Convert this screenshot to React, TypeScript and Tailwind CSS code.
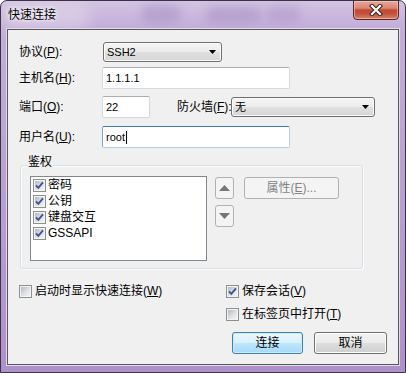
import React from "react";

const Mn = ({ c }: { c: string }) => (
  <span className="underline decoration-1 underline-offset-[1px]">{c}</span>
);

const Box = ({ checked }: { checked?: boolean }) => (
  <span className="relative flex h-[13px] w-[13px] shrink-0 items-center justify-center border border-[#8e8f8f] bg-[#f4f4f4]">
    <span className="h-[9px] w-[9px] bg-[linear-gradient(135deg,#b3b8c0_0%,#dfe1e4_55%,#f3f3f3_100%)]" />
    {checked && (
      <svg className="absolute left-[0px] top-[0px]" width="11" height="11" viewBox="0 0 11 11">
        <path d="M2 5.3 L4.3 7.8 L9 2.3" fill="none" stroke="#3d5496" strokeWidth="1.9" />
      </svg>
    )}
  </span>
);

const Combo = ({ w, value }: { w: string; value: string }) => (
  <div
    className={`${w} flex h-[20px] items-center justify-between rounded-[3px] border border-[#707070] bg-[linear-gradient(#f5f5f5_0%,#ececec_50%,#e0e0e0_51%,#d6d6d6_100%)] pl-[3px] pr-[5px] text-[11px] shadow-[inset_0_0_0_1px_#fbfbfb]`}
  >
    <span className="font-['Liberation_Sans','Noto_Sans_CJK_SC',sans-serif]">{value}</span>
    <svg width="7" height="4" viewBox="0 0 7 4">
      <polygon points="0,0 7,0 3.5,4" fill="#000" />
    </svg>
  </div>
);

const Edit = ({ w, value, focus }: { w: string; value: string; focus?: boolean }) => (
  <div
    className={`${w} flex h-[22px] items-center rounded-[2px] border bg-white pl-[3px] text-[11px] ${
      focus
        ? "border-[#b5cfe7] border-t-[#3d7bad] border-l-[#7aa6cf]"
        : "border-[#d6d9df] border-t-[#abadb3]"
    }`}
  >
    <span>{value}</span>
    {focus && <span className="ml-[1px] h-[13px] w-[1px] bg-black" />}
  </div>
);

const Arrow = ({ up }: { up?: boolean }) => (
  <button className="flex h-[22px] w-[19px] items-center justify-center rounded-[3px] border border-[#adb2b5] bg-[#f4f4f4]">
    <svg width="11" height="6" viewBox="0 0 11 6">
      <polygon points={up ? "0,6 11,6 5.5,0" : "0,0 11,0 5.5,6"} fill="#767676" />
    </svg>
  </button>
);

const CheckRow = ({ checked, children }: { checked?: boolean; children: React.ReactNode }) => (
  <div className="flex h-[13px] items-center gap-[3px]">
    <Box checked={checked} />
    <span className="whitespace-nowrap leading-[13px]">{children}</span>
  </div>
);

const App = () => {
  const auth = ["密码", "公钥", "键盘交互", "GSSAPI"];

  return (
    <div className="relative h-[373px] w-[406px] overflow-hidden rounded-t-[7px] border border-[#3a3344] bg-[linear-gradient(180deg,#d3c3e3_0%,#c4aed9_7%,#b79dd0_60%,#ae91ca_100%)] font-['Liberation_Sans','Noto_Sans_CJK_SC',sans-serif] text-[12px] text-black">
      {/* glass streaks */}
      <div className="absolute left-[140px] top-[4px] h-[18px] w-[40px] rounded-full bg-[#a58cc0] opacity-50 blur-[5px]" />
      <div className="absolute left-[205px] top-[6px] h-[16px] w-[55px] rounded-full bg-[#a58cc0] opacity-50 blur-[5px]" />
      <div className="absolute left-[265px] top-[5px] h-[16px] w-[35px] rounded-full bg-[#a58cc0] opacity-40 blur-[5px]" />
      <div className="absolute left-[0px] top-[0px] h-[30px] w-[90px] rounded-full bg-[#e6dced] opacity-50 blur-[8px]" />

      {/* close button */}
      <div className="absolute right-[6px] top-[-1px] flex h-[20px] w-[46px] items-center justify-center rounded-b-[4px] border border-[#5a2626] bg-[linear-gradient(#e9a898_0%,#d98574_40%,#c24a33_50%,#c4513b_70%,#d9826a_100%)] shadow-[inset_0_0_0_1px_rgba(255,220,210,0.5)]">
        <svg width="14" height="12" viewBox="0 0 14 12">
          <path d="M3 2 L11 10 M11 2 L3 10" stroke="#3b2323" strokeWidth="4.2" strokeLinecap="square" />
          <path d="M3 2 L11 10 M11 2 L3 10" stroke="#fff" strokeWidth="2.2" strokeLinecap="square" />
        </svg>
      </div>

      {/* title */}
      <div className="relative flex h-[28px] items-center pl-[7px]">
        <span className="text-[12px] [text-shadow:0_0_6px_#fff,0_0_3px_#fff]">快速连接</span>
      </div>

      {/* client area */}
      <div className="relative mx-[6px] h-[336px] border border-[#585858] bg-[#f0f0f0] shadow-[0_0_0_1px_#e2d9ea]">
        <div className="flex flex-col pt-[12px]">
          <div className="flex h-[20px] items-center pl-[11px]">
            <span className="w-[84px]">
              协议(<Mn c="P" />):
            </span>
            <Combo w="w-[119px]" value="SSH2" />
          </div>

          <div className="mt-[5px] flex h-[22px] items-center pl-[11px]">
            <span className="w-[83px]">
              主机名(<Mn c="H" />):
            </span>
            <Edit w="w-[188px]" value="1.1.1.1" />
          </div>

          <div className="mt-[7px] flex h-[22px] items-center pl-[11px]">
            <span className="w-[83px]">
              端口(<Mn c="O" />):
            </span>
            <Edit w="w-[48px]" value="22" />
            <span className="ml-[27px] w-[54px] whitespace-nowrap">
              防火墙(<Mn c="F" />):
            </span>
            <Combo w="w-[144px]" value="无" />
          </div>

          <div className="mt-[8px] flex h-[22px] items-center pl-[11px]">
            <span className="w-[83px]">
              用户名(<Mn c="U" />):
            </span>
            <Edit w="w-[188px]" value="root" focus />
          </div>

          {/* auth group */}
          <div className="relative ml-[12px] mt-[17px] h-[104px] w-[343px] rounded-[3px] border border-[#d5dfe5] shadow-[inset_1px_1px_0_#fff,1px_1px_0_#fff]">
            <span className="absolute left-[6px] top-[-11px] bg-[#f0f0f0] px-[1px] leading-[14px]">鉴权</span>
            <div className="flex pl-[9px] pt-[10px]">
              <div className="h-[85px] w-[177px] border border-[#828790] bg-white">
                {auth.map((a) => (
                  <div key={a} className="flex h-[16px] items-center gap-[2px] pl-[2px]">
                    <Box checked />
                    <span className="leading-[16px]">{a}</span>
                  </div>
                ))}
              </div>
              <div className="ml-[8px] mt-[1px] flex flex-col gap-[6px]">
                <Arrow up />
                <Arrow />
              </div>
              <button className="ml-[10px] mt-[1px] h-[22px] w-[95px] rounded-[3px] border border-[#adb2b5] bg-[#f4f4f4] text-[#838383]">
                属性(<Mn c="E" />)...
              </button>
            </div>
          </div>

          {/* options */}
          <div className="mt-[16px] flex">
            <div className="w-[218px] pl-[11px]">
              <CheckRow>
                启动时显示快速连接(<Mn c="W" />)
              </CheckRow>
            </div>
            <div className="flex flex-col gap-[10px]">
              <CheckRow checked>
                保存会话(<Mn c="V" />)
              </CheckRow>
              <CheckRow>
                在标签页中打开(<Mn c="T" />)
              </CheckRow>
            </div>
          </div>

          {/* buttons */}
          <div className="mt-[11px] flex justify-end gap-[11px] pr-[11px]">
            <button className="h-[22px] w-[71px] rounded-[3px] border border-[#3c7fb1] bg-[linear-gradient(#eaf6fd_0%,#d9f0fc_50%,#bee6fd_51%,#a7d9f5_100%)] shadow-[inset_0_0_0_1px_#cdebfb]">
              连接
            </button>
            <button className="h-[22px] w-[73px] rounded-[3px] border border-[#707070] bg-[linear-gradient(#f2f2f2_0%,#ebebeb_50%,#dddddd_51%,#cfcfcf_100%)] shadow-[inset_0_0_0_1px_#fcfcfc]">
              取消
            </button>
          </div>
        </div>
      </div>
    </div>
  );
};

export default App;
